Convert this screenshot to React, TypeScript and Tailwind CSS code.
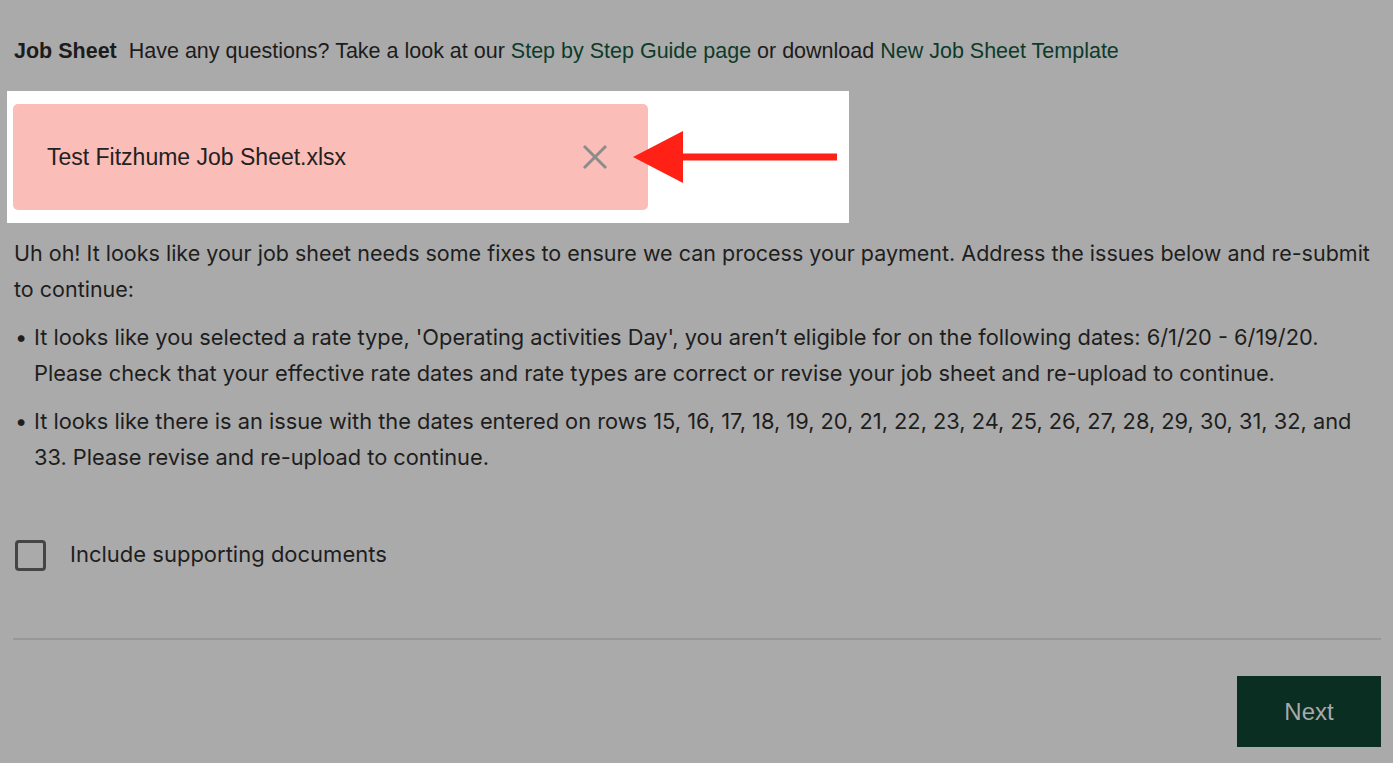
import React from 'react';

const issues = [
  "It looks like you selected a rate type, 'Operating activities Day', you aren\u2019t eligible for on the following dates: 6/1/20 - 6/19/20. Please check that your effective rate dates and rate types are correct or revise your job sheet and re-upload to continue.",
  'It looks like there is an issue with the dates entered on rows 15, 16, 17, 18, 19, 20, 21, 22, 23, 24, 25, 26, 27, 28, 29, 30, 31, 32, and 33. Please revise and re-upload to continue.',
];

const App = () => {
  return (
    <div className="w-[1393px] h-[763px] overflow-hidden bg-[#aaaaaa] text-[#1c1c1c] pl-[13px] pr-[12px] pt-[39px]">
      {/* Header */}
      <div className="pl-px text-[21.5px] leading-[24px] whitespace-nowrap" style={{ fontFamily: '"Liberation Sans", Arial, sans-serif' }}>
        <span className="font-bold">Job Sheet</span>
        <span className="ml-[12px]">Have any questions? Take a look at our </span>
        <span className="text-[#0d3b2a]">Step by Step Guide page</span>
        <span> or download </span>
        <span className="text-[#0d3b2a]">New Job Sheet Template</span>
      </div>

      {/* Uploaded file, highlighted */}
      <div className="mt-[28px] -ml-[6px] w-[842px] h-[132px] bg-white flex items-center pl-[6px]">
        <div className="w-[635px] h-[106px] rounded-[5px] bg-[#fbbdb7] flex items-center justify-between pl-[34px] pr-[40px]">
          <span className="text-[23px] text-[#222]" style={{ fontFamily: '"Liberation Sans", Arial, sans-serif' }}>Test Fitzhume Job Sheet.xlsx</span>
          <svg width="26" height="26" viewBox="0 0 26 26" className="text-[#8c8c8c]">
            <path d="M2 2 L24 24 M24 2 L2 24" stroke="currentColor" strokeWidth="3" />
          </svg>
        </div>
        <svg width="204" height="52" viewBox="0 0 204 52" className="ml-[-15px]">
          <polygon points="0,26 50,0 50,52" fill="#ff2016" />
          <rect x="50" y="22.5" width="154" height="7" fill="#ff2016" />
        </svg>
      </div>

      {/* Errors */}
      <div className="mt-[12px] text-[21.5px] leading-[36px] text-[#1e1e1e]" style={{ fontFamily: 'Inter, "Noto Sans", sans-serif' }}>
        <p className="pl-px">Uh oh! It looks like your job sheet needs some fixes to ensure we can process your payment. Address the issues below and re-submit to continue:</p>
        <ul className="mt-[12px] flex flex-col gap-[12px] text-[21.8px]">
          {issues.map((t, i) => (
            <li key={i} className="flex">
              <span className="w-[21px] shrink-0 pl-[2px]">&bull;</span>
              <span>{t}</span>
            </li>
          ))}
        </ul>
      </div>

      {/* Supporting docs */}
      <label className="mt-[65px] flex items-center gap-[24px] pl-[2px]">
        <span className="w-[31px] h-[31px] rounded-[4px] border-[3px] border-[#454545]" />
        <span className="-mt-[3px] text-[22px] text-[#1e1e1e]" style={{ fontFamily: 'Inter, "Noto Sans", sans-serif' }}>Include supporting documents</span>
      </label>

      <div className="mt-[67px] h-[2px] bg-[#989898]" />

      <div className="mt-[36px] flex justify-end">
        <button className="w-[144px] h-[71px] bg-[#0a2e22] text-[#a9a9a9] text-[24px]" style={{ fontFamily: '"Liberation Sans", Arial, sans-serif' }}>
          Next
        </button>
      </div>
    </div>
  );
};

export default App;
